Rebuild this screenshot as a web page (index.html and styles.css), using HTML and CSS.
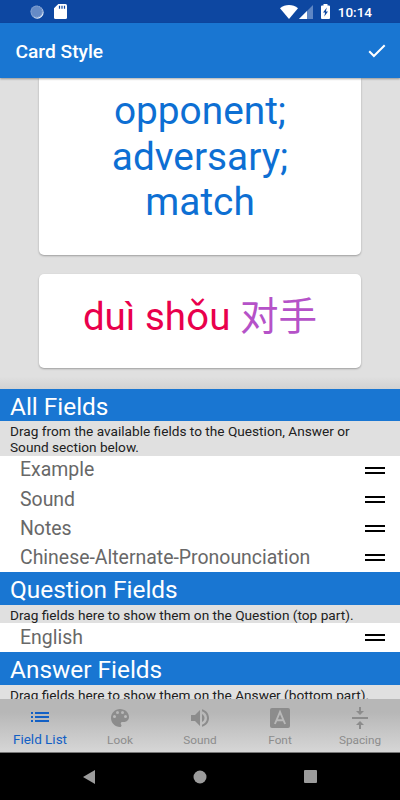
FILE: index.html
```html
<!DOCTYPE html>
<html lang="en">
<head>
<meta charset="utf-8">
<title>Card Style</title>
<link rel="stylesheet" href="styles.css">
</head>
<body>
<div class="screen">
  <div class="status">
    <svg class="sync" width="14" height="14" viewBox="0 0 14 14"><circle cx="7.3" cy="7.4" r="6.3" fill="#e8f0fa"/><circle cx="6.6" cy="6.6" r="6.2" fill="#668bc6"/><circle cx="6.6" cy="6.6" r="5.5" fill="none" stroke="#91add9" stroke-width="1" stroke-dasharray="1 1"/></svg>
    <svg class="sd" width="13" height="15" viewBox="0 0 13 15"><path fill="#fff" d="M4.3 0h7.2A1.5 1.5 0 0 1 13 1.500v12a1.500 1.500 0 0 1-1.500 1.500h-10A1.500 1.500 0 0 1 0 13.500V4.300z"/><path d="M5.500 1.800v3M8 1.800v3M10.500 1.800v3" stroke="#0d47a1" stroke-width="1.200"/></svg>
    <svg class="wifi" width="18" height="14" viewBox="0 0 18 14"><path fill="#fff" d="M0 3.300C5-1.100 13-1.100 18 3.300L9 14z"/></svg>
    <svg class="signal" width="14" height="14" viewBox="0 0 14 14"><path fill="#5e86c4" d="M14 0v14H0z"/><path fill="#fff" d="M8 6v8H0z"/></svg>
    <svg class="battery" width="9" height="15" viewBox="0 0 9 15"><path fill="#fff" d="M2.500 1.400V0h4v1.400H8q1 0 1 1V14q0 1-1 1H1q-1 0-1-1V2.400q0-1 1-1z"/><path fill="#0d47a1" d="M5.800 3.500 2 8.600h2.100L3.300 12.600 7 7.400H4.900z"/></svg>
    <span class="clock">10:14</span>
  </div>
  <header class="appbar">
    <h1>Card Style</h1>
    <svg width="18" height="14" viewBox="0 0 18 14"><path d="M1.200 7.200 5.900 12 16.700 1.200" fill="none" stroke="#fff" stroke-width="2"/></svg>
  </header>
  <main class="preview">
    <div class="card question">opponent;<br>adversary;<br>match</div>
    <div class="card answer"><span class="pinyin">duì shǒu</span> <span class="hanzi">对手</span></div>
  </main>
  <section class="fields">
    <h2>All Fields</h2>
    <p class="two">Drag from the available fields to the Question, Answer or<br>Sound section below.</p>
    <div class="row"><span>Example</span><i class="grip"></i></div>
    <div class="row"><span>Sound</span><i class="grip"></i></div>
    <div class="row"><span>Notes</span><i class="grip"></i></div>
    <div class="row"><span>Chinese-Alternate-Pronounciation</span><i class="grip"></i></div>
    <h2>Question Fields</h2>
    <p>Drag fields here to show them on the Question (top part).</p>
    <div class="row"><span>English</span><i class="grip"></i></div>
    <h2>Answer Fields</h2>
    <p>Drag fields here to show them on the Answer (bottom part).</p>
  </section>
  <nav class="tabs">
    <div class="tab active"><svg width="24" height="24" viewBox="0 0 24 24"><path fill="currentColor" d="M3 13h2v-2H3v2zm0 4h2v-2H3v2zm0-8h2V7H3v2zm4 4h14v-2H7v2zm0 4h14v-2H7v2zM7 7v2h14V7H7z"/></svg><span>Field List</span></div>
    <div class="tab"><svg width="24" height="24" viewBox="0 0 24 24"><path fill="currentColor" d="M12 3c-4.970 0-9 4.030-9 9s4.030 9 9 9c.83 0 1.500-.67 1.500-1.500 0-.39-.15-.74-.39-1.010-.23-.26-.38-.61-.38-.99 0-.83.67-1.500 1.500-1.500H16c2.760 0 5-2.240 5-5 0-4.420-4.030-8-9-8zm-5.500 9a1.500 1.500 0 1 1 0-3 1.500 1.500 0 0 1 0 3zm3-4a1.500 1.500 0 1 1 0-3 1.500 1.500 0 0 1 0 3zm5 0a1.500 1.500 0 1 1 0-3 1.500 1.500 0 0 1 0 3zm3 4a1.500 1.500 0 1 1 0-3 1.500 1.500 0 0 1 0 3z"/></svg><span>Look</span></div>
    <div class="tab"><svg width="24" height="24" viewBox="0 0 24 24"><path fill="currentColor" d="M3 9v6h4l5 5V4L7 9H3zm13.500 3c0-1.770-1.020-3.290-2.500-4.030v8.050c1.480-.73 2.500-2.250 2.500-4.020zM14 3.230v2.060c2.890.86 5 3.540 5 6.710s-2.110 5.850-5 6.710v2.060c4.010-.91 7-4.490 7-8.770s-2.990-7.860-7-8.770z"/></svg><span>Sound</span></div>
    <div class="tab"><svg width="24" height="24" viewBox="0 0 24 24"><rect x="2" y="2" width="20" height="20" rx="2" fill="currentColor"/><path d="M6.900 18 12 6l5.100 12M8.700 14.300h6.600" fill="none" stroke="#b9b9b9" stroke-width="1.900"/></svg><span>Font</span></div>
    <div class="tab"><svg width="24" height="24" viewBox="0 0 24 24"><path fill="currentColor" d="M8 19h3v4h2v-4h3l-4-4-4 4zm8-14h-3V1h-2v4H8l4 4 4-4zM4 11v2h16v-2H4z"/></svg><span>Spacing</span></div>
  </nav>
  <div class="sysnav">
    <svg width="12" height="14" viewBox="0 0 12 14"><path fill="#9c9c9c" d="M12 0v14L0 7z"/></svg>
    <svg width="14" height="14" viewBox="0 0 14 14"><circle cx="7" cy="7" r="6.500" fill="#9c9c9c"/></svg>
    <svg width="13" height="13" viewBox="0 0 13 13"><rect width="13" height="13" rx="1" fill="#9c9c9c"/></svg>
  </div>
</div>
</body>
</html>
```
FILE: styles.css
```css
* { box-sizing: border-box; }
body { margin: 0; font-family: Roboto, "Noto Sans CJK SC", sans-serif; }
.screen { width: 400px; height: 800px; overflow: hidden; display: flex; flex-direction: column; background: #e0e0e0; }
.screen > * { flex-shrink: 0; }
.status { height: 23px; background: #0d47a1; display: flex; align-items: flex-start; padding: 4px 28px 0 30px; }
.sync { margin-top: 1px; }
.sd { margin-left: 10px; }
.wifi { margin-left: auto; margin-top: 1px; }
.signal { margin-left: 1px; margin-top: 1px; }
.battery { margin-left: 8px; }
.clock { margin-left: 7.500px; color: #fff; font-size: 13.500px; line-height: 16px; font-weight: 500; }
.appbar { height: 55px; background: #1976d2; display: flex; align-items: center; justify-content: space-between; padding: 0 14px 0 15.500px; box-shadow: 0 1px 2px rgba(0,0,0,.35); position: relative; z-index: 1; }
h1 { margin: 1px 0 0; color: #fff; font-size: 19.200px; font-weight: 500; }
.preview { height: 311px; padding: 0 39px; background: linear-gradient(#e0e0e0 96%, #d2d2d2); }
.card { background: #fff; border-radius: 5px; box-shadow: 0 1px 2px rgba(0,0,0,.3); text-align: center; font-size: 38.800px; line-height: 45.700px; }
.question { height: 176.500px; padding-top: 10px; color: #0d6fd3; border-radius: 0 0 5px 5px; }
.answer { height: 94px; margin-top: 19.500px; padding-top: 20px; font-size: 38.500px; }
.pinyin { color: #e9004c; }
.hanzi { display: inline-block; color: #b552c8; font-family: "Noto Sans CJK SC", sans-serif; font-weight: 400; line-height: 1; }
.fields { height: 310px; overflow: hidden; background: #fff; }
h2 { margin: 0; height: 32.300px; background: #1976d2; color: #fff; font-size: 24.400px; line-height: 36px; font-weight: 400; padding-left: 10px; }
p { margin: 0; height: 18.400px; padding: 2px 0 0 10px; background: #e0e0e0; color: #212121; font-size: 13.650px; line-height: 16px; white-space: nowrap; }
.two { height: 34.600px; }
.row { height: 29.150px; display: flex; align-items: center; justify-content: space-between; padding: 0 15px 0 20px; color: #686868; font-size: 19.450px; line-height: 28px; }
.grip { width: 20px; height: 7px; border: solid #000; border-width: 2px 0; }
.tabs { height: 54px; display: grid; grid-template-columns: repeat(5, 1fr); background: linear-gradient(#b7b7b7 25%, #d6d6d6); border-bottom: 1px solid #777; }
.tab { display: flex; flex-direction: column; align-items: center; padding-top: 7px; color: #8c8c8c; font-size: 11.800px; line-height: 14px; }
.tab span { margin-top: 3px; }
.tab.active { color: #1260c5; font-size: 13.500px; }
.tab.active svg { margin-top: -1px; }
.sysnav { height: 47px; background: #000; display: flex; align-items: center; justify-content: space-between; padding: 0 83px; }
```
